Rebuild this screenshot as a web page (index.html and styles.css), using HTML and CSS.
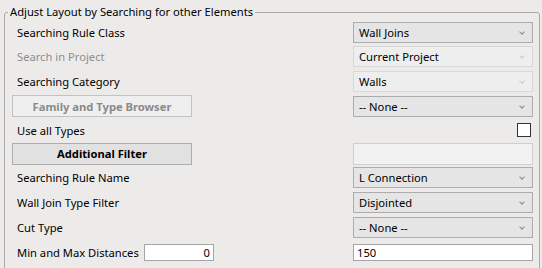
FILE: index.html
```html
<!DOCTYPE html>
<html lang="en">
<head>
    <meta charset="UTF-8">
    <title>Adjust Layout</title>
    <link rel="stylesheet" href="styles.css">
</head>
<body>
    <fieldset class="group">
        <legend>Adjust Layout by Searching for other Elements</legend>

        <div class="grid">
            <span class="lbl">Searching Rule Class</span>
            <div class="combo">Wall Joins<span class="arrow"></span></div>

            <span class="lbl disabled">Search in Project</span>
            <div class="combo off">Current Project<span class="arrow"></span></div>

            <span class="lbl">Searching Category</span>
            <div class="combo off">Walls<span class="arrow"></span></div>

            <button class="btn" disabled>Family and Type Browser</button>
            <div class="combo">-- None --<span class="arrow"></span></div>

            <span class="lbl">Use all Types</span>
            <span class="check"></span>

            <button class="btn">Additional Filter</button>
            <div class="blank"></div>

            <span class="lbl">Searching Rule Name</span>
            <div class="combo">L Connection<span class="arrow"></span></div>

            <span class="lbl">Wall Join Type Filter</span>
            <div class="combo">Disjointed<span class="arrow"></span></div>

            <span class="lbl">Cut Type</span>
            <div class="combo">-- None --<span class="arrow"></span></div>

            <div class="dist">
                <span class="lbl dist-lbl">Min and Max Distances</span>
                <input class="num right" type="text" value="0">
            </div>
            <input class="num" type="text" value="150">
        </div>
    </fieldset>
</body>
</html>
```

FILE: styles.css
```css
body {
    margin: 0;
    padding: 4px 3px 0 4px;
    background-color: #edebea;
    font-family: "Noto Sans", sans-serif;
    font-size: 11.2px;
    color: #000;
    overflow: hidden;
}
.group {
    margin: 0;
    padding: 0 6px 12px 7px;
    border: 1px solid #a9a9a9;
    border-radius: 3px;
}
.group legend {
    padding: 0 2px;
    margin-left: -4px;
    line-height: 16px;
}
.grid {
    display: grid;
    grid-template-columns: 341px 180px;
    grid-template-rows: 24px 25px 25px 24px 24px 23px 25px 25px 25px 25px;
    align-items: center;
}
.lbl {
    padding-left: 5px;
    white-space: nowrap;
}
.lbl.disabled {
    color: #8d8d8d;
}
.combo {
    position: relative;
    height: 19px;
    line-height: 19px;
    padding-left: 5px;
    background: #e6e5e5;
    border: 1px solid #acacac;
}
.combo.off {
    background: #efeeee;
    border-color: #d8d8d8;
}
.arrow {
    position: absolute;
    right: 8px;
    top: 7px;
    width: 3px;
    height: 3px;
    border-right: 1px solid #8a8a8a;
    border-bottom: 1px solid #8a8a8a;
    transform: rotate(45deg);
}
.combo.off .arrow {
    border-color: #c8c8c8;
}
.btn {
    width: 180px;
    height: 22px;
    margin: 0;
    padding: 0;
    font-family: inherit;
    font-size: inherit;
    font-weight: bold;
    color: #000;
    background: #e1e1e1;
    border: 1px solid #adadad;
}
.btn:disabled {
    color: #8a8a8a;
    background: #f0efef;
    border-color: #c2c2c2;
}
.check {
    justify-self: end;
    margin-right: 2px;
    width: 12px;
    height: 12px;
    background: #fff;
    border: 1px solid #333;
}
.blank {
    height: 20px;
    background: #f3f2f2;
    border: 1px solid #cfcfcf;
}
.dist {
    display: flex;
    align-items: center;
}
.dist-lbl {
    width: 127px;
}
.num {
    box-sizing: border-box;
    width: 180px;
    height: 17px;
    margin: 0;
    padding: 0 3px;
    font-family: inherit;
    font-size: inherit;
    background: #fff;
    border: 1px solid #a5a5a5;
    outline: none;
}
.num.right {
    width: 70px;
    text-align: right;
}
```
